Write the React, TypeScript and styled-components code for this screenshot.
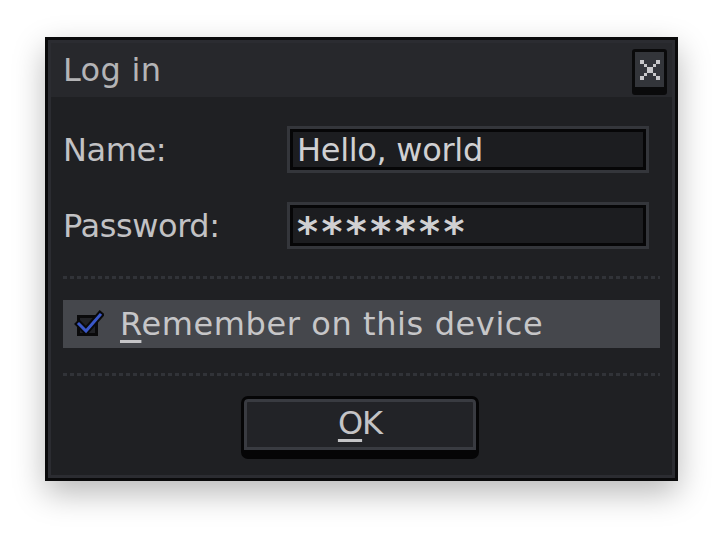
import React from "react";
import styled, { createGlobalStyle } from "styled-components";

const Global = createGlobalStyle`
  html, body { margin: 0; padding: 0; background: #ffffff; }
  body { width: 724px; height: 534px; overflow: hidden; font-family: "DejaVu Sans", sans-serif; }
`;

const Page = styled.div`
  padding: 37px 0 0 45px;
`;

const Window = styled.div`
  box-sizing: border-box;
  width: 633px;
  height: 444px;
  border: 3px solid #0a0a0b;
  background: #1f2023;
  box-shadow: inset 0 0 0 3px #2b2c31, 0 12px 30px rgba(0, 0, 0, 0.28);
  display: flex;
  flex-direction: column;
`;

const TitleBar = styled.div`
  box-sizing: border-box;
  height: 57px;
  padding: 0 5px 0 12px;
  background: #27282c;
  border: 3px solid #2b2c31;
  border-bottom: none;
  display: flex;
  align-items: center;
  justify-content: space-between;
`;

const Title = styled.span`
  font-size: 32px;
  color: #b4b4b6;
  letter-spacing: 0.3px;
`;

const CloseButton = styled.button`
  box-sizing: border-box;
  width: 35px;
  height: 46px;
  margin-top: 4px;
  padding: 0;
  background: #33353a;
  border: 3px solid #0a0a0b;
  border-bottom-width: 8px;
  border-radius: 3px;
  display: flex;
  align-items: center;
  justify-content: center;
`;

const Body = styled.div`
  flex: 1;
  padding: 29px 15px 0 15px;
  display: flex;
  flex-direction: column;
`;

const FormGrid = styled.div`
  display: grid;
  grid-template-columns: 224px 362px;
  row-gap: 29px;
  align-items: center;
`;

const Label = styled.label`
  font-size: 32px;
  color: #c2c2c4;
  letter-spacing: -0.4px;
`;

const Field = styled.div<{ $spacing?: number }>`
  box-sizing: border-box;
  height: 47px;
  border: 3px solid #34363b;
  box-shadow: inset 0 0 0 3px #060607;
  background: #1c1d20;
  padding: 0 0 0 7px;
  display: flex;
  align-items: center;
  font-size: 32px;
  color: #d0d0d2;
  letter-spacing: ${(p) => p.$spacing ?? 0}px;
`;

const Stars = styled.span`
  font-size: 40px;
  line-height: 1;
  padding-top: 12px;
  letter-spacing: 3.5px;
  font-weight: bold;
`;

const Separator = styled.div<{ $top: number }>`
  height: 3px;
  margin-top: ${(p) => p.$top}px;
  background: repeating-linear-gradient(to right, #313338 0 4px, transparent 4px 7px);
`;

const CheckRow = styled.div`
  box-sizing: border-box;
  height: 48px;
  margin-top: 21px;
  background: #45474c;
  padding-left: 11px;
  display: flex;
  align-items: center;
  gap: 16px;
`;

const CheckText = styled.span`
  font-size: 32px;
  color: #c6c6c8;
  letter-spacing: 0.6px;
`;

const Mnemonic = styled.span`
  text-decoration: underline;
  text-decoration-thickness: 3px;
  text-underline-offset: 5px;
`;

const ButtonRow = styled.div`
  margin-top: 20px;
  display: flex;
  justify-content: center;
  padding-right: 3px;
`;

const OkButton = styled.button`
  box-sizing: border-box;
  width: 238px;
  height: 63px;
  padding: 0 0 4px;
  background: #222327;
  border: 3px solid #050506;
  border-bottom-width: 9px;
  border-radius: 7px;
  box-shadow: inset 0 0 0 3px #393b41;
  font-family: "DejaVu Sans", sans-serif;
  font-size: 32px;
  color: #c4c4c6;
  letter-spacing: -1px;
`;

const CheckIcon = () => (
  <svg width="30" height="30" viewBox="0 0 30 30">
    <rect x="3" y="6" width="21" height="21" fill="#0a0a0b" />
    <rect x="6" y="9" width="15" height="15" fill="#222327" />
    <polyline points="5,15 12,22 26,6" fill="none" stroke="#0a0a0b" strokeWidth="7" strokeLinecap="square" />
    <polyline points="5,15 12,22 26,6" fill="none" stroke="#3a58c9" strokeWidth="3" strokeLinecap="square" />
  </svg>
);

const CloseIcon = () => (
  <svg width="22" height="22" viewBox="0 0 22 22" shapeRendering="crispEdges">
    <g fill="#c8c8ca">
      <rect x="1" y="1" width="4" height="4" />
      <rect x="17" y="1" width="4" height="4" />
      <rect x="5" y="5" width="3" height="3" />
      <rect x="14" y="5" width="3" height="3" />
      <rect x="8" y="8" width="6" height="6" />
      <rect x="5" y="14" width="3" height="3" />
      <rect x="14" y="14" width="3" height="3" />
      <rect x="1" y="17" width="4" height="4" />
      <rect x="17" y="17" width="4" height="4" />
    </g>
  </svg>
);

export default function App() {
  return (
    <>
      <Global />
      <Page>
        <Window>
          <TitleBar>
            <Title>Log in</Title>
            <CloseButton aria-label="Close">
              <CloseIcon />
            </CloseButton>
          </TitleBar>
          <Body>
            <FormGrid>
              <Label>Name:</Label>
              <Field $spacing={-0.3}>Hello, world</Field>
              <Label>Password:</Label>
              <Field>
                <Stars>*******</Stars>
              </Field>
            </FormGrid>
            <Separator $top={27} />
            <CheckRow>
              <CheckIcon />
              <CheckText>
                <Mnemonic>R</Mnemonic>emember on this device
              </CheckText>
            </CheckRow>
            <Separator $top={25} />
            <ButtonRow>
              <OkButton>
                <Mnemonic>O</Mnemonic>K
              </OkButton>
            </ButtonRow>
          </Body>
        </Window>
      </Page>
    </>
  );
}
